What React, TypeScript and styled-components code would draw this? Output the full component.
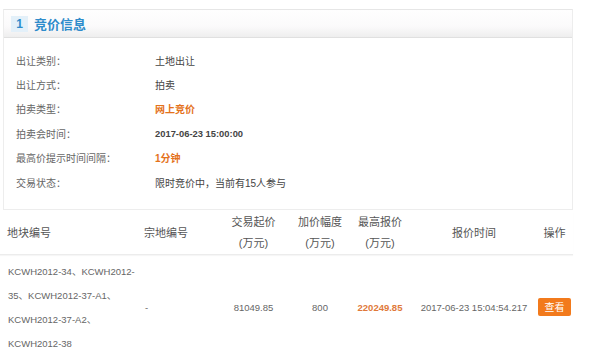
import { createGlobalStyle, styled } from "styled-components";

const GlobalStyle = createGlobalStyle`
  body {
    margin: 0;
    background: #fff;
    font-family: "Liberation Sans", Arial, "Noto Sans CJK SC", sans-serif;
  }
`;

const Page = styled.div`
  width: 573px;
  padding-top: 9px;
`;

const Panel = styled.section`
  margin-left: 3px;
  border: 1px solid #ededed;
  border-top-color: #e6e6e6;
`;

const PanelHead = styled.div`
  height: 27px;
  display: flex;
  align-items: center;
  padding-left: 7px;
  background: linear-gradient(#fefefe, #fbfafb 60%, #eeeeee);
  border-bottom: 1px solid #e0e0e0;
`;

const Badge = styled.span`
  width: 17px;
  height: 16px;
  display: flex;
  align-items: center;
  justify-content: center;
  background: #e3f0f9;
  color: #2f8ccb;
  font-size: 12px;
  font-weight: bold;
`;

const Title = styled.h2`
  margin: 0 0 0 6px;
  color: #2f8ccb;
  font-size: 13px;
  font-weight: bold;
  font-family: "Noto Sans CJK SC", sans-serif;
`;

const InfoList = styled.dl`
  margin: 0;
  padding: 10px 0 15px 12px;
  display: grid;
  grid-template-columns: 139px 1fr;
  grid-auto-rows: 24.4px;
  align-items: center;
  font-size: 10px;
`;

const Label = styled.dt`
  color: #666;
`;

const Value = styled.dd<{ $accent?: boolean; $bold?: boolean }>`
  margin: 0;
  color: ${(p) => (p.$accent ? "#e4721b" : "#444")};
  font-weight: ${(p) => (p.$bold || p.$accent ? "bold" : "normal")};
  font-size: ${(p) => (p.$bold ? "9.4px" : "10px")};
`;

const cols = "137px 78px 77px 56px 64px 124px 37px";

const HeadRow = styled.div`
  display: grid;
  grid-template-columns: ${cols};
  align-items: center;
  height: 42px;
  margin-top: 2px;
  border-bottom: 1px solid #ececec;
  box-shadow: 0 1px 1px #f6f6f6;
`;

const HeadCell = styled.div<{ $left?: boolean }>`
  font-size: 11px;
  line-height: 21px;
  color: #555;
  text-align: ${(p) => (p.$left ? "left" : "center")};
  padding-left: ${(p) => (p.$left ? "7px" : "0")};
`;

const BodyRow = styled.div`
  display: grid;
  grid-template-columns: ${cols};
  align-items: center;
  padding-top: 5px;
`;

const Cell = styled.div<{ $left?: boolean; $price?: boolean }>`
  font-size: 9.5px;
  line-height: 23.8px;
  color: ${(p) => (p.$price ? "#e0793a" : "#666")};
  font-weight: ${(p) => (p.$price ? "bold" : "normal")};
  text-align: ${(p) => (p.$left ? "left" : "center")};
  padding-left: ${(p) => (p.$left ? "8px" : "0")};
  white-space: ${(p) => (p.$left ? "normal" : "nowrap")};
`;

const ViewButton = styled.button`
  width: 33px;
  height: 18px;
  padding: 0;
  border: none;
  border-radius: 2px;
  background: #f27a1c;
  color: #fff;
  font-size: 10px;
  font-family: "Noto Sans CJK SC", sans-serif;
  cursor: pointer;
`;

const info: { label: string; value: string; accent?: boolean; bold?: boolean }[] = [
  { label: "出让类别：", value: "土地出让" },
  { label: "出让方式：", value: "拍卖" },
  { label: "拍卖类型：", value: "网上竞价", accent: true },
  { label: "拍卖会时间：", value: "2017-06-23 15:00:00", bold: true },
  { label: "最高价提示时间间隔：", value: "1分钟", accent: true },
  { label: "交易状态：", value: "限时竞价中，当前有15人参与" },
];

const parcels = ["34", "35", "37-A1", "37-A2", "38"];

export default function App() {
  return (
    <Page>
      <GlobalStyle />
      <Panel>
        <PanelHead>
          <Badge>1</Badge>
          <Title>竞价信息</Title>
        </PanelHead>
        <InfoList>
          {info.map((row) => (
            <>
              <Label key={row.label}>{row.label}</Label>
              <Value $accent={row.accent} $bold={row.bold}>
                {row.value}
              </Value>
            </>
          ))}
        </InfoList>
      </Panel>
      <HeadRow>
        <HeadCell $left>地块编号</HeadCell>
        <HeadCell $left>宗地编号</HeadCell>
        <HeadCell>
          交易起价
          <br />
          (万元)
        </HeadCell>
        <HeadCell>
          加价幅度
          <br />
          (万元)
        </HeadCell>
        <HeadCell>
          最高报价
          <br />
          (万元)
        </HeadCell>
        <HeadCell>报价时间</HeadCell>
        <HeadCell>操作</HeadCell>
      </HeadRow>
      <BodyRow>
        <Cell $left>
          {parcels.map((p, i) => (
            <span key={p}>
              KCWH2012-
              <wbr />
              {p}
              {i < parcels.length - 1 ? "、" : ""}
            </span>
          ))}
        </Cell>
        <Cell $left>-</Cell>
        <Cell>81049.85</Cell>
        <Cell>800</Cell>
        <Cell $price>220249.85</Cell>
        <Cell>2017-06-23 15:04:54.217</Cell>
        <Cell>
          <ViewButton>查看</ViewButton>
        </Cell>
      </BodyRow>
    </Page>
  );
}
